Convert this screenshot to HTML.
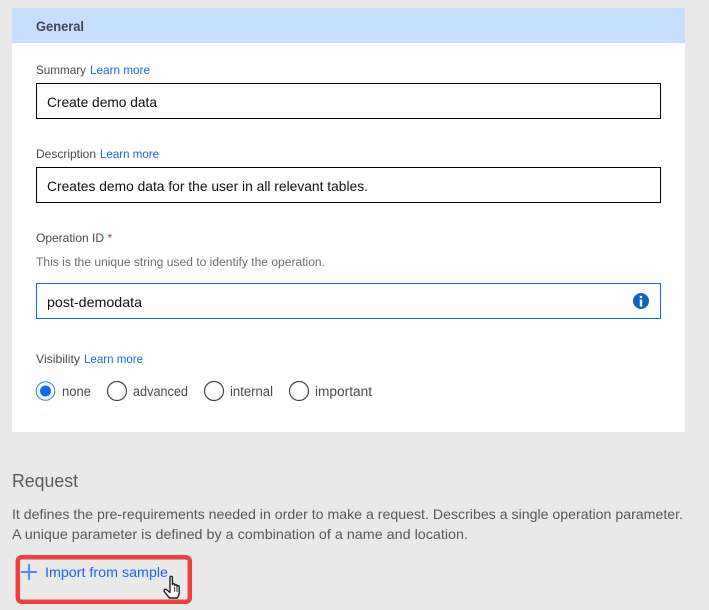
<!DOCTYPE html>
<html><head><meta charset="utf-8"><style>
html,body{margin:0;padding:0;background:#e9e9e9;width:709px;height:610px;overflow:hidden}
svg{display:block}
text{font-family:"Liberation Sans",sans-serif}
</style></head><body>
<svg width="709" height="610" viewBox="0 0 709 610" xmlns="http://www.w3.org/2000/svg">
<rect width="709" height="610" fill="#e9e9e9"/>
<rect x="12" y="8" width="673" height="424" fill="#fff"/>
<rect x="12" y="8" width="673" height="35" fill="#c7deff"/>
<text x="36" y="31" font-size="13.5" font-weight="bold" fill="#454454" textLength="48" lengthAdjust="spacingAndGlyphs">General</text>

<text x="36" y="74" font-size="12" fill="#4a4a4a" textLength="50" lengthAdjust="spacingAndGlyphs">Summary</text>
<text x="90" y="74" font-size="12" fill="#1a66f0" textLength="60" lengthAdjust="spacingAndGlyphs">Learn more</text>
<rect x="36.5" y="83.5" width="624" height="35" fill="#fff" stroke="#000"/>
<text x="47" y="107" font-size="14" fill="#111" textLength="110" lengthAdjust="spacingAndGlyphs">Create demo data</text>

<text x="36" y="158" font-size="12" fill="#4a4a4a" textLength="60" lengthAdjust="spacingAndGlyphs">Description</text>
<text x="100" y="158" font-size="12" fill="#1a66f0" textLength="59" lengthAdjust="spacingAndGlyphs">Learn more</text>
<rect x="36.5" y="167.5" width="624" height="35" fill="#fff" stroke="#000"/>
<text x="47" y="191" font-size="14" fill="#111" textLength="321" lengthAdjust="spacingAndGlyphs">Creates demo data for the user in all relevant tables.</text>

<text x="36" y="242" font-size="12" fill="#4a4a4a" textLength="68" lengthAdjust="spacingAndGlyphs">Operation ID</text>
<text x="107.500" y="242" font-size="12" fill="#c0343a">*</text>
<text x="36" y="266" font-size="11.500" fill="#6e6e6e" textLength="289" lengthAdjust="spacingAndGlyphs">This is the unique string used to identify the operation.</text>
<rect x="36.5" y="283.5" width="624" height="35" fill="#fff" stroke="#0b6cf0"/>
<text x="47" y="307" font-size="14" fill="#111" textLength="95" lengthAdjust="spacingAndGlyphs">post-demodata</text>
<circle cx="641" cy="301" r="8" fill="#0a67bd"/>
<rect x="639.800" y="299.500" width="2.400" height="7" fill="#fff"/>
<rect x="639.800" y="295.800" width="2.400" height="2.200" fill="#fff"/>

<text x="36" y="363" font-size="12" fill="#4a4a4a" textLength="44" lengthAdjust="spacingAndGlyphs">Visibility</text>
<text x="84" y="363" font-size="12" fill="#1a66f0" textLength="59" lengthAdjust="spacingAndGlyphs">Learn more</text>

<circle cx="45.500" cy="391" r="9.300" fill="#fff" stroke="#2b7ff2"/>
<circle cx="45.500" cy="391" r="5.500" fill="#0b6cf0"/>
<text x="62" y="396" font-size="13.500" fill="#4a4a4a" textLength="29" lengthAdjust="spacingAndGlyphs">none</text>
<circle cx="117" cy="391" r="9.500" fill="#fff" stroke="#444" stroke-width="1.200"/>
<text x="133" y="396" font-size="13.500" fill="#4a4a4a" textLength="55" lengthAdjust="spacingAndGlyphs">advanced</text>
<circle cx="214" cy="391" r="9.500" fill="#fff" stroke="#444" stroke-width="1.200"/>
<text x="230" y="396" font-size="13.500" fill="#4a4a4a" textLength="43" lengthAdjust="spacingAndGlyphs">internal</text>
<circle cx="299" cy="391" r="9.500" fill="#fff" stroke="#444" stroke-width="1.200"/>
<text x="315" y="396" font-size="13.500" fill="#4a4a4a" textLength="57" lengthAdjust="spacingAndGlyphs">important</text>

<text x="12" y="487" font-size="18.500" fill="#5a5a5a" textLength="66" lengthAdjust="spacingAndGlyphs">Request</text>
<text x="12" y="519" font-size="14" fill="#585858" textLength="671" lengthAdjust="spacingAndGlyphs">It defines the pre-requirements needed in order to make a request. Describes a single operation parameter.</text>
<text x="12" y="539" font-size="14" fill="#585858" textLength="456" lengthAdjust="spacingAndGlyphs">A unique parameter is defined by a combination of a name and location.</text>

<rect x="17.800" y="557.300" width="172" height="44.500" rx="4" fill="none" stroke="#ef4040" stroke-width="4.500"/>
<rect x="21" y="571" width="16" height="2" fill="#4f8ff5"/>
<rect x="28" y="564" width="2" height="16" fill="#4f8ff5"/>
<text x="45" y="577" font-size="13.500" fill="#1a66f0" textLength="123" lengthAdjust="spacingAndGlyphs">Import from sample</text>

<path d="M170 577.500c0-1.600 2.400-1.600 2.400 0v7.200c0-1.500 2.300-1.500 2.300 0v1c0-1.400 2.300-1.400 2.300 0v1c0-1.300 2.200-1.300 2.200 0v6.300c0 2.500-1 3.500-2 5h-7.700l-5-6.200c-1.400-1.800.6-3.400 2.200-2l3.300 2.700z" fill="#fff" stroke="#222" stroke-width="1.400" stroke-linejoin="round"/>
<path d="M174.700 587v5M177 587v5M179 588v4" stroke="#222" stroke-width="0.900" fill="none"/>
</svg>
</body></html>
